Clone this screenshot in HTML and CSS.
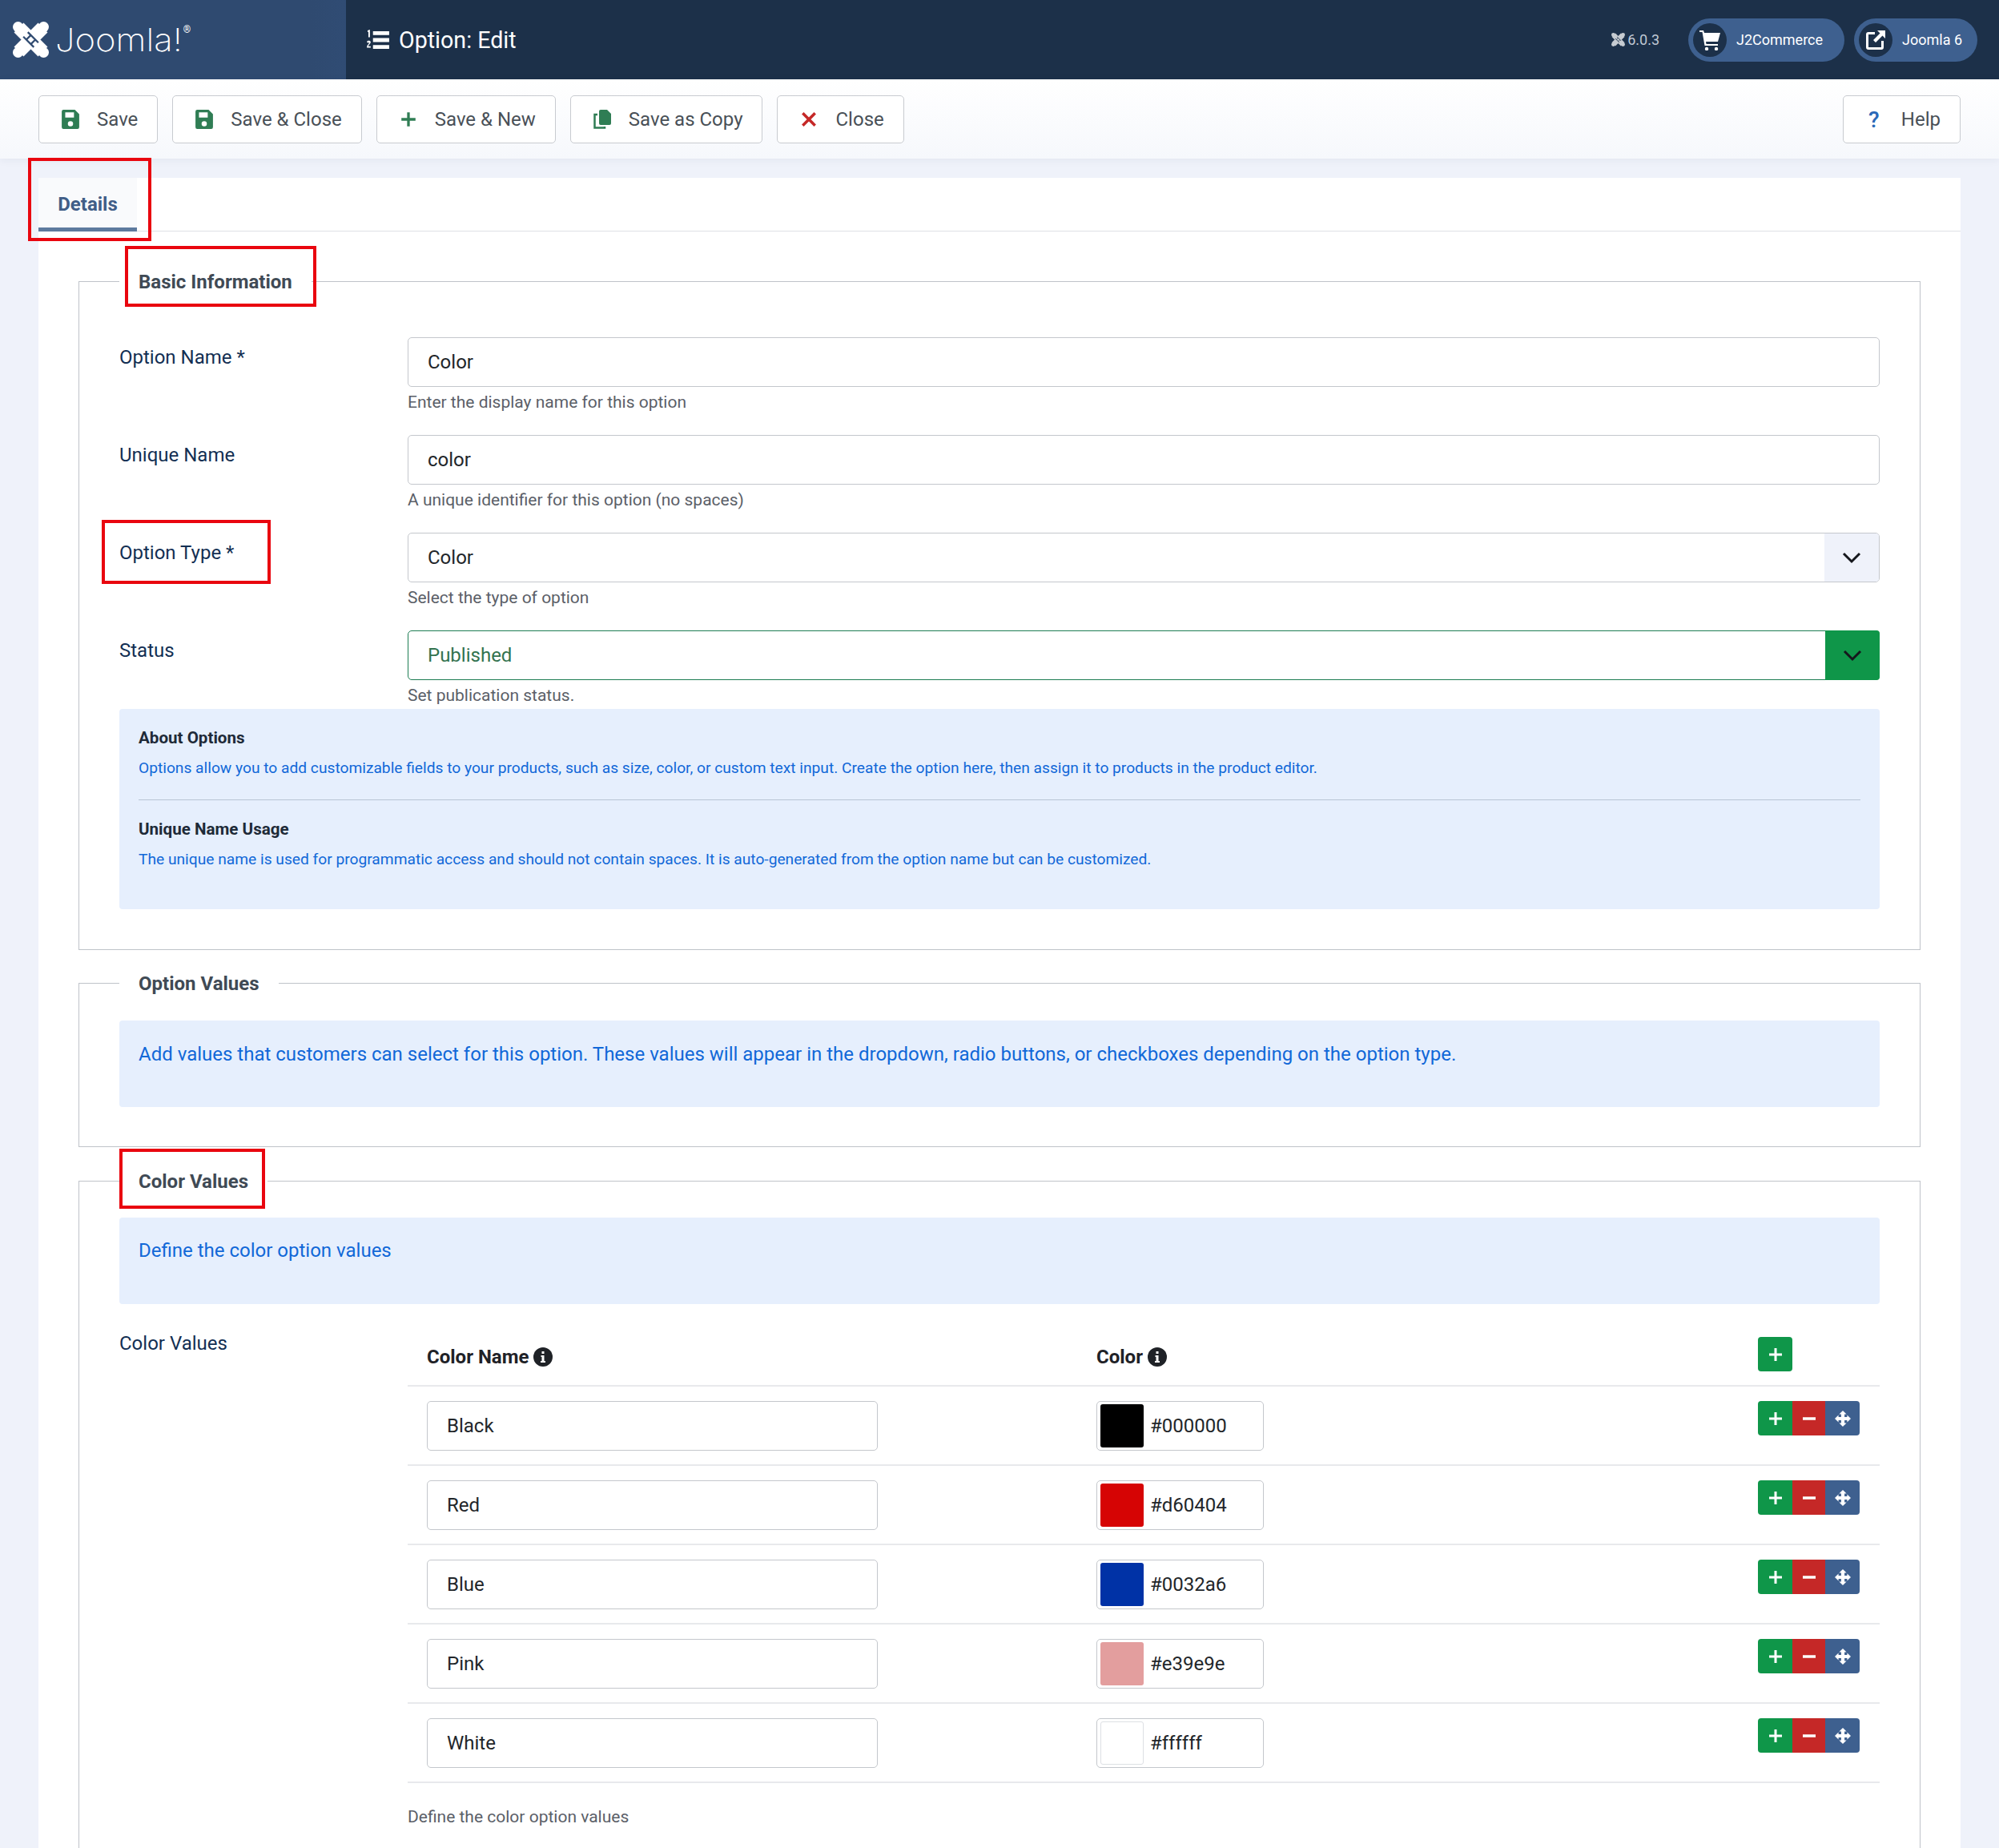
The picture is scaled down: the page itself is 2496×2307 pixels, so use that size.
FILE: index.html
```html
<!DOCTYPE html>
<html lang="en">
<head>
    <meta charset="UTF-8">
    <meta name="viewport" content="width=device-width, initial-scale=1.0">
    <title>Option: Edit</title>
    <link rel="stylesheet" href="styles.css">
</head>
<body>
    <svg class="defs" width="0" height="0">
        <symbol id="mark" viewBox="0 0 48 48">
            <path d="M8 8 40 40M40 8 8 40" fill="none" stroke="#fff" stroke-width="18"/>
            <circle cx="7" cy="7" r="7" fill="#fff"/>
            <circle cx="41" cy="7" r="7" fill="#fff"/>
            <circle cx="7" cy="41" r="7" fill="#fff"/>
            <circle cx="41" cy="41" r="7" fill="#fff"/>
            <path d="M14 20 28 34M20 14 34 28M18 24 24 18M24 30 30 24" fill="none" stroke="currentColor" stroke-width="2.400"/>
        </symbol>
        <symbol id="floppy" viewBox="0 0 20 22">
            <path fill="currentColor" fill-rule="evenodd" d="M2 0h13l5 5v15a2 2 0 0 1-2 2H2a2 2 0 0 1-2-2V2a2 2 0 0 1 2-2zm2 3v6h10V3zm6 10a3 3 0 1 0 0 6 3 3 0 0 0 0-6z"/>
        </symbol>
        <symbol id="info" viewBox="0 0 24 24">
            <circle cx="12" cy="12" r="12" fill="#1f2227"/>
            <path fill="#fff" d="M9.500 10h4v7h1.500v2H9v-2h1.500v-5H9.500zM10.500 5h3v3h-3z"/>
        </symbol>
        <symbol id="plus" viewBox="0 0 20 20">
            <path d="M10 2v16M2 10h16" stroke="currentColor" stroke-width="3" fill="none"/>
        </symbol>
        <symbol id="minus" viewBox="0 0 20 20">
            <path d="M2 10h16" stroke="currentColor" stroke-width="3.500" fill="none"/>
        </symbol>
        <symbol id="move" viewBox="0 0 24 24">
            <path fill="currentColor" d="M12 0l5.500 5.500h-3v4h4v-3L24 12l-5.500 5.500v-3h-4v4h3L12 24l-5.500-5.500h3v-4h-4v3L0 12l5.500-5.500v3h4v-4h-3z"/>
        </symbol>
        <symbol id="chev" viewBox="0 0 24 16">
            <path d="M2 3l10 10L22 3" fill="none" stroke="currentColor" stroke-width="3"/>
        </symbol>
    </svg>

    <header class="topbar">
        <div class="brand">
            <svg class="brand-mark"><use href="#mark"/></svg>
            <span class="brand-name">Joomla!</span><sup class="brand-reg">®</sup>
        </div>
        <div class="page-title">
            <svg class="list-icon" viewBox="0 0 30 26">
                <path fill="#fff" d="M9 2h21v5H9zM9 11h21v5H9zM9 20h21v5H9z"/>
                <path fill="#fff" d="M2 1l3-1v10H3V3H2zM1 16c0-2 5-2.500 5 .5 0 2-3 3-3 5h3v2H1c0-4 3-4.500 3-6.500 0-.5-1-.5-1 .5z"/>
            </svg>
            <h1>Option: Edit</h1>
        </div>
        <div class="top-right">
            <span class="version"><svg class="version-mark"><use href="#mark"/></svg>6.0.3</span>
            <a class="pill">
                <span class="pill-icon">
                    <svg viewBox="0 0 26 26" width="26" height="26"><path fill="#fff" d="M0 1h5l1 3h20l-3 11H8l.5 3H23v2H6.500L3.500 3H0z"/><circle cx="9" cy="24" r="2.200" fill="#fff"/><circle cx="21" cy="24" r="2.200" fill="#fff"/></svg>
                </span>
                J2Commerce
            </a>
            <a class="pill pill-short">
                <span class="pill-icon">
                    <svg viewBox="0 0 24 24" width="24" height="24"><path fill="none" stroke="#fff" stroke-width="3" d="M11 3.500H3a1.500 1.500 0 0 0-1.500 1.500v16A1.500 1.500 0 0 0 3 22.500h16a1.500 1.500 0 0 0 1.500-1.500v-8"/><path fill="#fff" d="M14 0h10v10l-3.500-3.500L12 15l-3-3 8.500-8.500z"/></svg>
                </span>
                Joomla 6
            </a>
        </div>
    </header>

    <nav class="toolbar">
        <button class="tbtn"><svg class="ico ico-green"><use href="#floppy"/></svg>Save</button>
        <button class="tbtn"><svg class="ico ico-green"><use href="#floppy"/></svg>Save &amp; Close</button>
        <button class="tbtn"><svg class="ico ico-green"><use href="#plus"/></svg>Save &amp; New</button>
        <button class="tbtn">
            <svg class="ico ico-green" viewBox="0 0 22 24"><path fill="currentColor" d="M9 0h8l5 5v12a2 2 0 0 1-2 2H9a2 2 0 0 1-2-2V2a2 2 0 0 1 2-2z"/><path fill="none" stroke="currentColor" stroke-width="2.500" d="M5 6H1.500v16.500H14V21"/></svg>
            Save as Copy
        </button>
        <button class="tbtn"><svg class="ico ico-red" viewBox="0 0 20 20"><path d="M3 3l14 14M17 3 3 17" stroke="currentColor" stroke-width="3.200" fill="none"/></svg>Close</button>
        <button class="tbtn tbtn-help"><span class="help-mark">?</span>Help</button>
    </nav>

    <main class="content">
        <div class="card">
            <div class="tabs">
                <span class="tab marked">Details</span>
            </div>
            <div class="tab-pane">
                <fieldset class="group group-basic">
                    <legend class="marked marked-legend">Basic Information</legend>
                    <div class="field">
                        <label>Option Name *</label>
                        <div class="control">
                            <div class="input">Color</div>
                            <small>Enter the display name for this option</small>
                        </div>
                    </div>
                    <div class="field">
                        <label>Unique Name</label>
                        <div class="control">
                            <div class="input">color</div>
                            <small>A unique identifier for this option (no spaces)</small>
                        </div>
                    </div>
                    <div class="field">
                        <label class="marked marked-label">Option Type *</label>
                        <div class="control">
                            <div class="input select">Color<span class="caret"><svg><use href="#chev"/></svg></span></div>
                            <small>Select the type of option</small>
                        </div>
                    </div>
                    <div class="field field-last">
                        <label>Status</label>
                        <div class="control">
                            <div class="input select select-ok">Published<span class="caret"><svg><use href="#chev"/></svg></span></div>
                            <small>Set publication status.</small>
                        </div>
                    </div>
                    <div class="alert alert-about">
                        <h4>About Options</h4>
                        <p>Options allow you to add customizable fields to your products, such as size, color, or custom text input. Create the option here, then assign it to products in the product editor.</p>
                        <hr>
                        <h4>Unique Name Usage</h4>
                        <p>The unique name is used for programmatic access and should not contain spaces. It is auto-generated from the option name but can be customized.</p>
                    </div>
                </fieldset>

                <fieldset class="group group-values">
                    <legend>Option Values</legend>
                    <div class="alert alert-big">Add values that customers can select for this option. These values will appear in the dropdown, radio buttons, or checkboxes depending on the option type.</div>
                </fieldset>

                <fieldset class="group group-colors">
                    <legend class="marked marked-legend2">Color Values</legend>
                    <div class="alert alert-big">Define the color option values</div>
                    <div class="field field-table">
                        <label>Color Values</label>
                        <div class="control">
                            <div class="vrow vhead">
                                <div class="col-name"><b>Color Name</b><svg class="info"><use href="#info"/></svg></div>
                                <div class="col-color"><b>Color</b><svg class="info"><use href="#info"/></svg></div>
                                <div class="col-act"><span class="act act-add act-solo"><svg><use href="#plus"/></svg></span></div>
                            </div>
                            <div class="vrow">
                                <div class="col-name"><div class="input">Black</div></div>
                                <div class="col-color"><div class="input swatch-box"><span class="swatch swatch-black"></span>#000000</div></div>
                                <div class="col-act"><span class="act act-add"><svg><use href="#plus"/></svg></span><span class="act act-del"><svg><use href="#minus"/></svg></span><span class="act act-move"><svg><use href="#move"/></svg></span></div>
                            </div>
                            <div class="vrow">
                                <div class="col-name"><div class="input">Red</div></div>
                                <div class="col-color"><div class="input swatch-box"><span class="swatch swatch-red"></span>#d60404</div></div>
                                <div class="col-act"><span class="act act-add"><svg><use href="#plus"/></svg></span><span class="act act-del"><svg><use href="#minus"/></svg></span><span class="act act-move"><svg><use href="#move"/></svg></span></div>
                            </div>
                            <div class="vrow">
                                <div class="col-name"><div class="input">Blue</div></div>
                                <div class="col-color"><div class="input swatch-box"><span class="swatch swatch-blue"></span>#0032a6</div></div>
                                <div class="col-act"><span class="act act-add"><svg><use href="#plus"/></svg></span><span class="act act-del"><svg><use href="#minus"/></svg></span><span class="act act-move"><svg><use href="#move"/></svg></span></div>
                            </div>
                            <div class="vrow">
                                <div class="col-name"><div class="input">Pink</div></div>
                                <div class="col-color"><div class="input swatch-box"><span class="swatch swatch-pink"></span>#e39e9e</div></div>
                                <div class="col-act"><span class="act act-add"><svg><use href="#plus"/></svg></span><span class="act act-del"><svg><use href="#minus"/></svg></span><span class="act act-move"><svg><use href="#move"/></svg></span></div>
                            </div>
                            <div class="vrow">
                                <div class="col-name"><div class="input">White</div></div>
                                <div class="col-color"><div class="input swatch-box"><span class="swatch swatch-white"></span>#ffffff</div></div>
                                <div class="col-act"><span class="act act-add"><svg><use href="#plus"/></svg></span><span class="act act-del"><svg><use href="#minus"/></svg></span><span class="act act-move"><svg><use href="#move"/></svg></span></div>
                            </div>
                            <small class="table-note">Define the color option values</small>
                        </div>
                    </div>
                </fieldset>
            </div>
        </div>
    </main>
</body>
</html>
```

FILE: styles.css
```css
*, *::after { box-sizing: border-box; }
html, body { height: 2307px; overflow: hidden; }
body {
    margin: 0;
    background: #eff2fa;
    color: #22262a;
    font-family: Roboto, "Liberation Sans", sans-serif;
    font-size: 24px;
}
.defs { position: absolute; }

/* top bar */
.topbar {
    height: 99px;
    background: #1c3049;
    display: flex;
    align-items: stretch;
    color: #fff;
}
.brand {
    width: 432px;
    background: linear-gradient(90deg, #2f4a70, #2f4a70 90%, #304c74);
    color: #2f4a70;
    display: flex;
    align-items: center;
    padding-left: 16px;
}
.brand-mark { width: 45px; height: 45px; margin-right: 8px; flex: none; }
.brand-name {
    font-family: Inter, Roboto, sans-serif;
    font-size: 40px;
    font-weight: 200;
    color: #fff;
    transform: scaleX(1.09);
    transform-origin: left center;
    margin-right: 14px;
}
.brand-reg { font-size: 12px; align-self: flex-start; margin-top: 30px; color: #fff; }
.page-title {
    display: flex;
    align-items: center;
    padding-left: 25px;
    flex: 1;
}
.list-icon { width: 29px; height: 25px; margin-right: 12px; }
.page-title h1 { margin: 0; font-size: 28.600px; font-weight: 400; }
.top-right {
    display: flex;
    align-items: center;
    padding-right: 27px;
}
.version { font-size: 18px; color: #c0c8d4; display: flex; align-items: center; margin-right: 24px; }
.version-mark { width: 17px; height: 17px; margin-right: 3px; opacity: .75; color: #1c3049; }
.pill {
    height: 54px;
    width: 195px;
    background: #3e608f;
    border-radius: 27px;
    display: flex;
    align-items: center;
    font-size: 18px;
    padding-left: 6px;
    margin-left: 12px;
}
.pill-short { width: 154px; }
.pill-icon {
    width: 42px;
    height: 42px;
    border-radius: 50%;
    background: #1c3049;
    display: flex;
    align-items: center;
    justify-content: center;
    margin-right: 12px;
}

/* toolbar */
.toolbar {
    height: 99px;
    padding: 20px 48px 0;
    display: flex;
    gap: 18px;
    background: linear-gradient(#fff, #f6f8fc);
    box-shadow: 0 2px 10px rgba(30, 50, 80, .06);
    position: relative;
}
.tbtn {
    height: 60px;
    padding: 0 24px 0 28px;
    display: flex;
    align-items: center;
    background: #fff;
    border: 1px solid #c8cbd0;
    border-radius: 5px;
    font: 400 24px Roboto, sans-serif;
    color: #495057;
}
.tbtn-help { margin-left: auto; padding-left: 27px; }
.ico { width: 22px; height: 24px; margin-right: 22px; }
.ico-green { color: #2f7d54; }
.ico-red { color: #c52827; }
.help-mark { color: #2a69b8; font-size: 28px; font-weight: 500; width: 22px; text-align: center; margin-right: 23px; }

/* main */
.content { padding: 24px 48px 0; }
.card { background: #fff; height: 2200px; position: relative; }
.tabs {
    height: 67px;
    border-bottom: 1px solid #dfe1e5;
    position: relative;
}
.tab {
    display: inline-block;
    width: 123px;
    height: 67px;
    line-height: 66px;
    text-align: center;
    font-weight: 700;
    color: #405d87;
    border-bottom: 5px solid #5d7a9e;
    background: #f9fafc;
}
.tab-pane { padding: 0 50px; }

/* fieldsets */
.group {
    margin: 0;
    padding: 0 50px;
    border: 1px solid #bfc3c9;
    min-width: 0;
    position: relative;
}
.group legend {
    margin-left: 0;
    padding: 0 24px;
    font-size: 24px;
    font-weight: 700;
    color: #404a55;
    height: 28px;
    line-height: 30px;
}
.group-basic { margin-top: 48px; height: 849px; padding-top: 56px; }
.group-values { margin-top: 27px; height: 219px; padding-top: 33px; }
.group-colors { margin-top: 28px; height: 900px; padding-top: 32px; }

/* form rows */
.field {
    display: flex;
    min-height: 122px;
    color: #132f53;
}
.field-last { min-height: 98px; }
.field label { width: 360px; padding-top: 11px; flex: none; line-height: 28px; height: 50px; }
.control { flex: 1; min-width: 0; }
.control small {
    display: block;
    font-size: 21px;
    color: #5b6068;
    margin-top: 6px;
    line-height: 26px;
}
.input {
    height: 62px;
    border: 1px solid #c4c7cc;
    border-radius: 5px;
    background: #fff;
    padding-left: 24px;
    line-height: 60px;
    color: #22262a;
    position: relative;
}
.select-ok { border-color: #1d7d53; color: #33734f; }
.caret {
    position: absolute;
    top: 0;
    right: 0;
    width: 68px;
    height: 60px;
    background: #eff2fa;
    border-radius: 0 4px 4px 0;
    display: flex;
    align-items: center;
    justify-content: center;
    color: #15171c;
}
.caret svg { width: 24px; height: 16px; }
.select-ok .caret { background: #0f9649; top: -1px; right: -1px; height: 62px; }

/* blue boxes */
.alert {
    background: #e6effd;
    border-radius: 4px;
    color: #1168d8;
    padding: 24px;
}
.alert-about { height: 250px; padding: 22px 24px; }
.alert-about h4 { margin: 0; font-size: 20.600px; line-height: 28px; font-weight: 700; color: #1e2a38; }
.alert-about p { margin: 10px 0 0; font-size: 19.200px; line-height: 28px; }
.alert-about hr { border: 0; border-top: 1px solid #b8c4d4; margin: 25px 0 22px; }
.alert-big { height: 108px; line-height: 34px; padding: 25px 24px; }
.group-colors .alert-big { padding-top: 24px; }

/* color table */
.field-table { margin-top: 24px; }
.vrow {
    display: flex;
    height: 99px;
    padding-top: 18px;
    border-bottom: 2px solid #e8e9ec;
}
.vhead { height: 79px; padding-top: 0; align-items: center; }
.col-name { width: 860px; padding-left: 24px; flex: none; }
.col-name .input { width: 563px; }
.col-color { width: 826px; flex: none; }
.vhead .col-name, .vhead .col-color { display: flex; align-items: center; color: #1f2227; padding-top: 6px; }
.vhead b { font-weight: 700; }
.info { width: 24px; height: 24px; margin-left: 6px; }
.swatch-box { width: 209px; padding-left: 4px; display: flex; align-items: center; gap: 8px; }
.swatch { width: 54px; height: 54px; border-radius: 3px; display: block; }
.swatch-black { background: #000; }
.swatch-red { background: #d60404; }
.swatch-blue { background: #0032a6; }
.swatch-pink { background: #e39e9e; }
.swatch-white { background: #fff; border: 1px solid #dde0e4; }
.col-act { display: flex; height: 43px; }
.act {
    width: 43px;
    height: 43px;
    display: flex;
    align-items: center;
    justify-content: center;
    color: #fff;
}
.act svg { width: 20px; height: 20px; }
.act-add { background: #0f9649; border-radius: 4px 0 0 4px; }
.act-del { background: #c52827; width: 41px; }
.act-move { background: #3e608f; border-radius: 0 4px 4px 0; }
.act-solo { border-radius: 4px; }
.table-note { margin-top: 29px !important; }

/* red annotation boxes */
.marked { position: relative; }
.marked::after {
    content: "";
    position: absolute;
    border: 4px solid #e9060f;
    pointer-events: none;
}
.tab::after { left: -13px; right: -18px; top: -25px; bottom: -17px; }
.marked-legend::after { left: 7px; right: -6px; top: -30px; bottom: -18px; }
.marked-label::after { left: -22px; width: 211px; top: -16px; height: 80px; }
.marked-legend2::after { left: 0; right: 3px; top: -26px; bottom: -21px; }
```
